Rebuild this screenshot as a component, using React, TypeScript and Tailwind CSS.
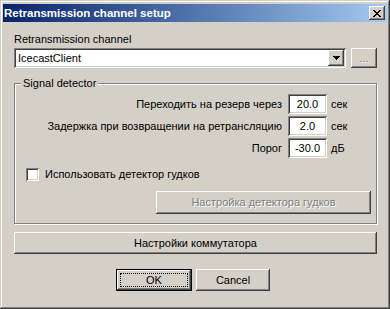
import React from "react";

const raised =
  "bg-[#d4d0c8] shadow-[inset_-1px_-1px_#404040,inset_1px_1px_#ffffff,inset_-2px_-2px_#808080,inset_2px_2px_#d4d0c8]";
const sunken =
  "bg-white shadow-[inset_1px_1px_#808080,inset_-1px_-1px_#ffffff,inset_2px_2px_#404040,inset_-2px_-2px_#d4d0c8]";

function NumField({ value }: { value: string }) {
  return (
    <div className={`${sunken} h-[20px] w-[39px] flex items-center justify-center text-black`}>
      {value}
    </div>
  );
}

export default function App() {
  const rows = [
    { label: "Переходить на резерв через", value: "20.0", unit: "сек" },
    { label: "Задержка при возвращении на ретрансляцию", value: "2.0", unit: "сек" },
    { label: "Порог", value: "-30.0", unit: "дБ" },
  ];

  return (
    <div className="w-[390px] h-[309px] bg-[#d4d0c8] p-[3px] pt-[4px] flex flex-col font-['Liberation_Sans',Arial,sans-serif] text-[11px] leading-[13px] text-black shadow-[inset_-1px_-1px_#404040,inset_1px_1px_#d4d0c8,inset_-2px_-2px_#808080,inset_2px_2px_#ffffff] overflow-hidden">
      {/* title bar */}
      <div className="h-[18px] flex items-center justify-between pl-[1px] pr-[2px] bg-gradient-to-r from-[#0a246a] to-[#a6caf0]">
        <span className="text-white font-bold text-[11.5px]">Retransmission channel setup</span>
        <div className={`${raised} w-[16px] h-[14px] flex items-center justify-center`}>
          <svg width="8" height="7" viewBox="0 0 8 7" shapeRendering="crispEdges">
            <path d="M0 0h2v1h-2zM6 0h2v1h-2zM1 1h2v1h-2zM5 1h2v1h-2zM2 2h4v1h-4zM3 3h2v1h-2zM2 4h4v1h-4zM1 5h2v1h-2zM5 5h2v1h-2zM0 6h2v1h-2zM6 6h2v1h-2z" fill="#000" />
          </svg>
        </div>
      </div>

      <div className="flex flex-col pl-[11px] pr-[10px]">
        <div className="mt-[11px]">Retransmission channel</div>

        <div className="mt-[2px] flex gap-[5px]">
          <div className={`${sunken} h-[20px] w-[332px] flex items-center justify-between pl-[4px] pr-[2px]`}>
            <span>IcecastClient</span>
            <div className={`${raised} w-[16px] h-[16px] flex items-center justify-center`}>
              <svg width="7" height="4" viewBox="0 0 7 4" shapeRendering="crispEdges">
                <path d="M0 0h7v1h-7zM1 1h5v1h-5zM2 2h3v1h-3zM3 3h1v1h-1z" fill="#000" />
              </svg>
            </div>
          </div>
          <div className={`${raised} h-[20px] w-[26px] flex items-center justify-center text-[#808080] [text-shadow:1px_1px_#ffffff]`}>
            ...
          </div>
        </div>

        {/* signal detector group */}
        <div className="relative mt-[15px] h-[141px] border border-[#808080] shadow-[inset_1px_1px_#ffffff,1px_1px_#ffffff] pt-[10px] pl-[11px] pr-[5px] flex flex-col">
          <span className="absolute -top-[7px] left-[6px] bg-[#d4d0c8] px-[2px]">Signal detector</span>

          <div className="grid grid-cols-[1fr_39px_44px] gap-y-[2px] items-center">
            {rows.map((r) => (
              <React.Fragment key={r.label}>
                <span className="text-right pr-[6px]">{r.label}</span>
                <NumField value={r.value} />
                <span className="pl-[4px]">{r.unit}</span>
              </React.Fragment>
            ))}
          </div>

          <div className="mt-[10px] flex items-center gap-[6px]">
            <div className={`${sunken} w-[13px] h-[13px]`} />
            <span>Использовать детектор гудков</span>
          </div>

          <div className={`${raised} mt-[10px] self-end w-[215px] h-[23px] flex items-center justify-center text-[#808080] [text-shadow:1px_1px_#ffffff]`}>
            Настройка детектора гудков
          </div>
        </div>

        <div className={`${raised} mt-[8px] h-[22px] flex items-center justify-center`}>
          Настройки коммутатора
        </div>

        <div className="mt-[15px] flex gap-[4px] ml-[102px]">
          <div className="w-[76px] h-[22px] border border-black">
            <div className={`${raised} h-full flex items-center justify-center p-[3px]`}>
              <div className="w-full h-full border border-dotted border-black flex items-center justify-center">
                OK
              </div>
            </div>
          </div>
          <div className={`${raised} w-[74px] h-[22px] flex items-center justify-center`}>
            Cancel
          </div>
        </div>
      </div>
    </div>
  );
}
